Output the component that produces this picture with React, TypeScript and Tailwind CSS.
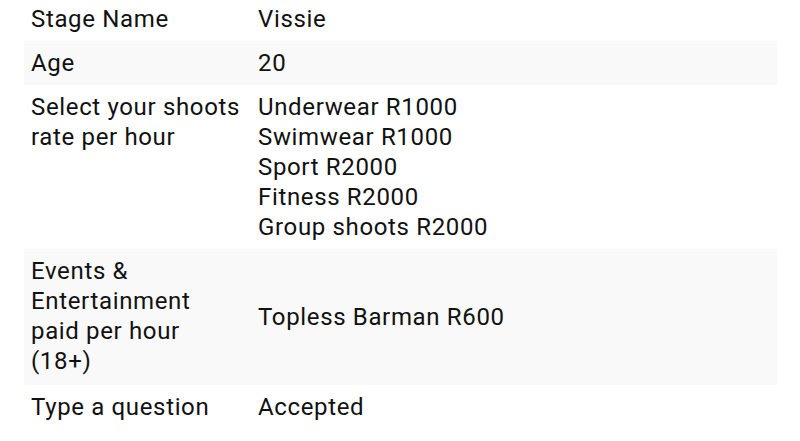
const rows: { label: string; values: string[]; middle?: boolean }[] = [
  { label: "Stage Name", values: ["Vissie"] },
  { label: "Age", values: ["20"] },
  {
    label: "Select your shoots rate per hour",
    values: ["Underwear R1000", "Swimwear R1000", "Sport R2000", "Fitness R2000", "Group shoots R2000"],
  },
  { label: "Events & Entertainment paid per hour (18+)", values: ["Topless Barman R600"], middle: true },
  { label: "Type a question", values: ["Accepted"] },
];

export default function App() {
  return (
    <div className="min-h-[441px] w-[800px] overflow-hidden bg-white">
      <table
        className="-mt-[3px] ml-[24px] w-[753px] text-[24px] leading-[30px] tracking-[0.65px] text-[#111111]"
        style={{ fontFamily: "Roboto, 'Noto Sans', sans-serif" }}
      >
        <tbody>
          {rows.map((row, i) => (
            <tr key={row.label} className={i % 2 === 1 ? "bg-[#f9f9f9]" : ""}>
              <td className={`w-[227px] px-[7px] pt-[7px] align-top ${row.middle ? "pb-[9px]" : "pb-[7px]"}`}>
                {row.label}
              </td>
              <td className={`px-[7px] py-[7px] ${row.middle ? "align-middle" : "align-top"}`}>
                {row.values.map((v) => (
                  <div key={v}>{v}</div>
                ))}
              </td>
            </tr>
          ))}
        </tbody>
      </table>
    </div>
  );
}
